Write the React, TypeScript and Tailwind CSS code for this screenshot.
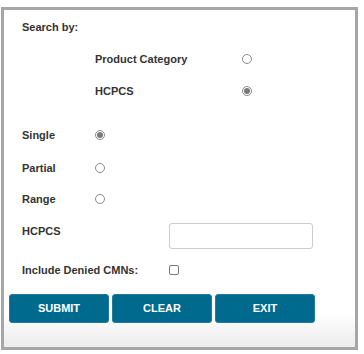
import React from 'react';

const Radio: React.FC<{ checked?: boolean }> = ({ checked }) => (
  <span className="flex h-[10px] w-[10px] items-center justify-center rounded-full border border-[#8a8a8a] bg-white">
    {checked && <span className="h-[6px] w-[6px] rounded-full bg-[#7a7a7a]" />}
  </span>
);

const label = "text-[11px] font-bold text-[#333] leading-[16px]";

const App: React.FC = () => {
  const buttons = ["SUBMIT", "CLEAR", "EXIT"];

  return (
    <div className="h-[354px] w-[364px] bg-white pt-[7px] pl-[1px] font-['Liberation_Sans',Arial,sans-serif]">
      <div className="flex h-[343px] w-[357px] flex-col border-[3px] border-[#a6a6a6] bg-[linear-gradient(to_bottom,#ffffff_90%,#ececec)] pl-[18px]">

        <div className="mt-[9px] flex h-[16px] items-center">
          <span className={label}>Search by:</span>
        </div>

        <div className="mt-[16px] flex h-[16px] items-center">
          <span className={`${label} ml-[73px] w-[147px]`}>Product Category</span>
          <Radio />
        </div>

        <div className="mt-[16px] flex h-[16px] items-center">
          <span className={`${label} ml-[73px] w-[147px]`}>HCPCS</span>
          <Radio checked />
        </div>

        <div className="mt-[28px] flex h-[16px] items-center">
          <span className={`${label} w-[73px]`}>Single</span>
          <Radio checked />
        </div>

        <div className="mt-[17px] flex h-[16px] items-center">
          <span className={`${label} w-[73px]`}>Partial</span>
          <Radio />
        </div>

        <div className="mt-[15px] flex h-[16px] items-center">
          <span className={`${label} w-[73px]`}>Range</span>
          <Radio />
        </div>

        <div className="mt-[16px] flex h-[26px] items-start">
          <span className={`${label} w-[147px]`}>HCPCS</span>
          <input className="h-[26px] w-[144px] rounded-[3px] border border-[#cccccc] bg-white outline-none" />
        </div>

        <div className="mt-[13px] flex h-[16px] items-center">
          <span className={`${label} w-[147px]`}>Include Denied CMNs:</span>
          <span className="h-[10px] w-[10px] rounded-[2px] border border-[#7a7a7a] bg-white" />
        </div>

        <div className="mt-[16px] ml-[-13px] flex gap-[3px]">
          {buttons.map((b) => (
            <button
              key={b}
              className="h-[29px] w-[100px] rounded-[3px] border border-[#1f7d9c] bg-[#006a8e] text-[11px] font-bold text-white"
            >
              {b}
            </button>
          ))}
        </div>

      </div>
    </div>
  );
};

export default App;
